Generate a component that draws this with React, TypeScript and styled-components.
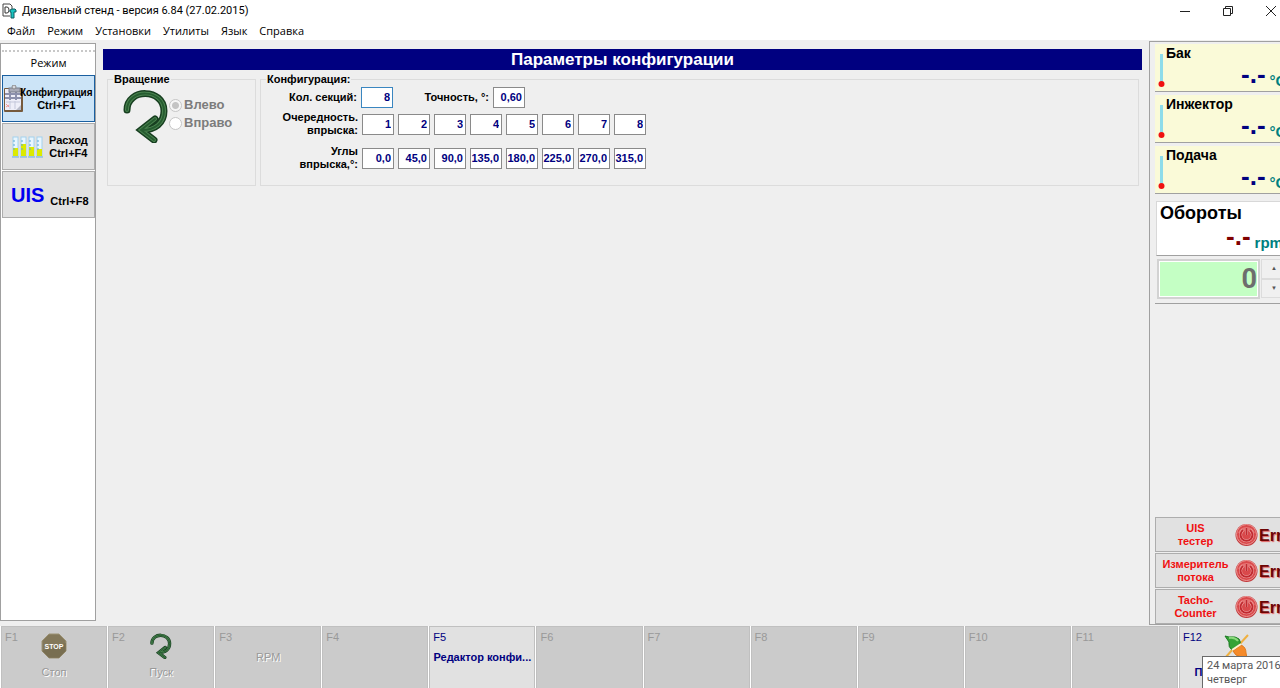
import React from "react";
import styled, { createGlobalStyle, css } from "styled-components";

const SANS = `"Liberation Sans", Arial, sans-serif`;
const UI = `"Open Sans", "Noto Sans", sans-serif`;
const UI_NARROW = `Roboto, "Open Sans", sans-serif`;

const GlobalStyle = createGlobalStyle`
  * { box-sizing: border-box; }
  body { margin: 0; background: #efefef; overflow: hidden; }
  button, input { font: inherit; color: inherit; }
  button { border-radius: 0; padding: 0; margin: 0; }
`;

const Shell = styled.div`
  display: flex;
  flex-direction: column;
  height: 100vh;
  overflow: hidden;
  background: #efefef;
  color: #000;
  font: bold 11px/13px ${SANS};
`;

const TitleBar = styled.header`
  display: flex;
  align-items: center;
  flex: none;
  height: 22px;
  padding-left: 2px;
  gap: 5px;
  background: #fff;
  font: 11px/16px ${UI_NARROW};
`;

const Title = styled.h1`
  flex: 1;
  margin: 0;
  font: inherit;
`;

const WindowButtons = styled.div`
  display: flex;
  align-items: center;
`;

const WindowButton = styled.button`
  display: flex;
  align-items: center;
  justify-content: center;
  width: 43px;
  height: 20px;
  border: 0;
  background: transparent;

  &:last-child { margin-right: -13px; }
`;

const MenuBar = styled.nav`
  display: flex;
  flex: none;
  height: 18px;
  padding-left: 7px;
  gap: 12px;
  background: #fff;
  font: 11px/18px ${UI};
`;

const MenuItem = styled.button`
  border: 0;
  background: transparent;
`;

const Body = styled.div`
  display: flex;
  flex: 1;
  min-height: 0;
`;

const ModePanel = styled.aside`
  display: flex;
  flex-direction: column;
  flex: none;
  gap: 1px;
  width: 96px;
  margin: 3px 0 5px;
  padding: 6px 0 0 1px;
  border: 1px solid #a0a0a0;
  background: #fff;
`;

const Grip = styled.div`
  border-top: 2px dotted #c8c8c8;
`;

const ModeCaption = styled.div`
  height: 21px;
  font: 11px/20px ${UI};
  text-align: center;
`;

const ModeButton = styled.button<{ $active?: boolean; $overlap?: boolean; $pad: number }>`
  display: flex;
  align-items: center;
  height: 47px;
  gap: ${(p) => (p.$overlap ? 0 : 6)}px;
  padding-left: ${(p) => p.$pad}px;
  overflow: hidden;
  border: 1px solid ${(p) => (p.$active ? "#1a5fa0" : "#adadad")};
  background: ${(p) => (p.$active ? "#cce4f7" : "#e1e1e1")};
  white-space: nowrap;

  svg {
    flex: none;
    margin-right: ${(p) => (p.$overlap ? -3 : 0)}px;
  }
`;

const LongName = styled.span`
  font-size: 10px;
`;

const UisMark = styled.span`
  color: #0000f0;
  font-size: 20px;
  line-height: 24px;
`;

const LowLabel = styled.span`
  padding-top: 14px;
`;

const Main = styled.main`
  flex: 1;
  min-width: 0;
  padding: 9px 7px 0;
`;

const Banner = styled.h2`
  margin: 0;
  background: #000080;
  color: #fff;
  font: bold 17px/21px ${SANS};
  text-align: center;
`;

const Groups = styled.div`
  display: flex;
  gap: 4px;
  padding: 3px 3px 0 4px;
`;

const Group = styled.fieldset<{ $grow?: boolean }>`
  ${(p) => (p.$grow ? css`flex: 1;` : css`flex: 0 0 149px;`)}
  height: 113px;
  min-width: 0;
  margin: 0;
  padding: 0;
  border: 1px solid #dcdcdc;
`;

const Legend = styled.legend`
  height: 13px;
  margin-left: 5px;
  padding: 0 1px;
`;

const Rotation = styled.div`
  display: flex;
  padding: 3px 0 0 15px;
`;

const RadioList = styled.div`
  display: flex;
  flex-direction: column;
  gap: 2px;
  padding-top: 8px;
`;

const RadioLabel = styled.label`
  display: flex;
  align-items: center;
  gap: 2px;
  color: #7c7c7c;
  font-size: 13px;
  line-height: 16px;
`;

const Radio = styled.input`
  appearance: none;
  width: 13px;
  height: 13px;
  margin: 0;
  border: 1px solid #c6c6c6;
  border-radius: 50%;
  background: #fff;

  &:checked {
    background: radial-gradient(circle, #c4c4c4 0 3px, #f6f6f6 4px);
  }
`;

const ConfigForm = styled.div`
  display: flex;
  flex-direction: column;
  margin-top: -2px;
`;

const ConfigRow = styled.div<{ $space?: number }>`
  display: flex;
  align-items: center;
  gap: 4px;
  height: 26px;
  margin-bottom: ${(p) => p.$space ?? 0}px;
`;

const FieldLabel = styled.label<{ $width?: number }>`
  flex: none;
  width: ${(p) => p.$width ?? 97}px;
  text-align: right;
`;

const Field = styled.input<{ $active?: boolean }>`
  width: 32px;
  height: 21px;
  padding: 0 2px 1px 0;
  border: 1px solid ${(p) => (p.$active ? "#3a86c0" : "#8a8a8a")};
  border-radius: 0;
  outline: 0;
  background: #fff;
  color: #000080;
  text-align: right;
`;

const SidePanel = styled.aside`
  flex: 0 0 131px;
  display: flex;
  flex-direction: column;
  margin: 1px 0 1px;
  padding: 2px 0 0 5px;
  overflow: hidden;
  border: solid #a0a0a0;
  border-width: 1px 0 1px 1px;
`;

const SensorCard = styled.section`
  flex: none;
  display: flex;
  width: 150px;
  height: 48px;
  margin-bottom: 3px;
  padding-left: 2px;
  border-bottom: 1px solid #a0a0a0;
  background: #fafad8;
`;

const SensorInfo = styled.div`
  flex: 1;
`;

const SensorName = styled.h3`
  margin: 0;
  font: bold 14px/18px ${SANS};
`;

const Reading = styled.div<{ $color: string; $indent: number }>`
  display: flex;
  align-items: flex-start;
  gap: 4px;
  padding-left: ${(p) => p.$indent}px;
  color: #008080;
  font: bold 15px/38px ${SANS};
  white-space: nowrap;

  output {
    color: ${(p) => p.$color};
    font: bold 26px/24px ${SANS};
  }
`;

const SpeedCard = styled.section`
  flex: none;
  width: 150px;
  height: 55px;
  margin: 4px 0 0 1px;
  padding-left: 3px;
  border: solid #d8d8d8;
  border-width: 1px 0 1px 1px;
  border-bottom-color: #a0a0a0;
  background: #fff;
`;

const SpeedName = styled.h3`
  margin: 0;
  font: bold 18px/22px ${SANS};
`;

const SpeedSetter = styled.div`
  flex: none;
  display: flex;
  width: 150px;
  height: 48px;
  padding: 3px 0 5px 2px;
  border-bottom: 1px solid #a0a0a0;
`;

const SpeedInput = styled.input`
  width: 103px;
  height: 40px;
  padding: 0 1px 0 0;
  border: 2px solid #d2d2d2;
  outline: 1px solid #fff;
  outline-offset: -3px;
  background: #c4ffc4;
  color: #6d6d6d;
  font: bold 27px/34px ${UI_NARROW};
  text-align: right;
`;

const Stepper = styled.div`
  display: flex;
  flex-direction: column;
  width: 26px;
  margin-left: 1px;

  button {
    flex: 1;
    border: 1px solid #dcdcdc;
    background: #f0f0f0;
    color: #555;
    font-size: 6px;
  }
`;

const Spacer = styled.div`
  flex: 1;
`;

const ErrorList = styled.div`
  flex: none;
  display: grid;
  gap: 1px;
`;

const ErrorButton = styled.button`
  display: flex;
  align-items: center;
  width: 150px;
  height: 35px;
  border: 1px solid #adadad;
  background: #e1e1e1;
  color: #f01010;

  svg { flex: none; }
`;

const ErrorLabel = styled.span`
  flex: 0 0 79px;
  text-align: center;
`;

const ErrorText = styled.span`
  margin-left: 1px;
  padding-top: 2px;
  color: #6d0404;
  font: bold 16px/20px ${SANS};
  text-shadow: 1px 1px 1px #e06060;
`;

const KeyBar = styled.footer`
  flex: none;
  display: grid;
  grid-template-columns: repeat(12, 1fr);
  gap: 1px;
  height: 62px;
  margin-right: -5px;
  padding-left: 1px;
  background: #fff;
`;

const KeyButton = styled.button<{ $enabled?: boolean }>`
  display: grid;
  grid-template-rows: 20px 1fr;
  min-width: 0;
  padding: 0 2px;
  border: solid #c0c0c0;
  border-width: 1px 1px 0;
  background: ${(p) => (p.$enabled ? "#e1e1e1" : "#cbcbcb")};
  color: ${(p) => (p.$enabled ? "#000080" : "#999")};
  text-align: left;
`;

const KeyName = styled.span`
  padding-left: 1px;
  font-weight: normal;
  line-height: 21px;
`;

const KeyContent = styled.span<{ $enabled?: boolean; $icon?: boolean }>`
  display: flex;
  flex-direction: column;
  align-items: center;
  min-width: 0;
  margin-top: ${(p) => (p.$icon ? -14 : 4)}px;
  gap: 7px;
  ${(p) => !p.$enabled && css`font-weight: normal; text-shadow: 1px 1px 0 #fff;`}

  svg { text-shadow: none; }
`;

const KeyText = styled.span`
  white-space: nowrap;
`;

const DateTip = styled.div`
  position: fixed;
  right: -4px;
  bottom: -2px;
  width: 82px;
  height: 34px;
  padding: 2px 0 0 4px;
  border: 1px solid #6a6a6a;
  background: #fff;
  color: #575757;
  font: 11px/14px ${UI_NARROW};
  white-space: nowrap;
`;

const AppIcon = () => (
  <svg width="15" height="16" viewBox="0 0 15 16" fill="none">
    <path d="M1 13V1h7l2 2v3M1 13h7" fill="#fff" stroke="#444" />
    <path d="M3 4h2q2 0 2 3t-2 3H3z" stroke="#333" />
    <path d="M8 7l2-1h3l1 1v2h-2v6H9V9H8z" fill="#18c4c0" stroke="#135a60" />
  </svg>
);

const ClipboardIcon = () => (
  <svg width="19" height="28" viewBox="0 0 19 28">
    <rect x="0" y="3" width="19" height="24" rx="1" fill="#765a3c" />
    <rect x="1" y="4" width="16" height="21" fill="#eeeef8" />
    <path d="M1 9h16M1 13h16M6 6v9M12 6v9" stroke="#8d91ad" strokeWidth="2" />
    <path d="M2 17h14M6 16v8M11 16v8" stroke="#c4c7da" />
    <rect x="5" y="3" width="11" height="4" fill="#a9abb8" stroke="#787c8a" />
    <circle cx="10" cy="2" r="2" fill="#d6d8e0" stroke="#888" />
    <path d="M2 19l3 3M2 22l3-2" stroke="#e99" />
    <path d="M12 25l5-5v5z" fill="#b9bcca" />
  </svg>
);

const TubesIcon = () => (
  <svg width="31" height="22" viewBox="0 0 31 22">
    {[0, 8, 16, 24].map((x, i) => (
      <g key={x}>
        <rect x={x + 1} y="1" width="5" height="19" fill="#e8f6ff" stroke="#a4d2ee" />
        <rect x={x + 1} y={[12, 8, 11, 13][i]} width="5" height={[8, 12, 9, 7][i]} fill="#dcea00" />
        <path d={`M${x + 1} 5h2M${x + 1} 9h2M${x + 1} 13h2`} stroke="#5aa8d8" />
        <path d={`M${x} 21h7`} stroke="#6fb0dc" />
      </g>
    ))}
  </svg>
);

const TURN = "M4 21C4 -1 41 -1 41 22C41 34 32 41 19 41M32 30L18 41L31 51";

const TurnIcon = ({ size, height, weight }: { size: number; height: number; weight: number }) => (
  <svg width={size} height={height} viewBox="0 0 46 54" fill="none" strokeLinecap="round">
    <path d={TURN} stroke="#173f20" strokeWidth={weight} />
    <path d={TURN} stroke="#4b8450" strokeWidth={weight - 3} />
    <path d={TURN} stroke="#265c30" strokeWidth="2" />
  </svg>
);

const Thermometer = () => (
  <svg width="9" height="46" viewBox="0 0 9 46">
    <rect x="3" y="10" width="3" height="28" fill="#8edcea" />
    <circle cx="4.500" cy="40" r="3" fill="#f01010" />
  </svg>
);

const PowerIcon = () => (
  <svg width="23" height="24" viewBox="0 0 23 24" fill="none">
    <circle cx="11.500" cy="12" r="11" fill="#c2383a" />
    <circle cx="11.500" cy="11.500" r="10" fill="#d9494b" stroke="#ee9b99" />
    <path d="M3 10a9 9 0 0 1 17 0q-8-4-17 0z" fill="#f0908e" opacity=".6" />
    <path d="M8 7a6 6 0 1 0 7 0M11.500 5v7" stroke="#f3aaa8" strokeWidth="3" />
    <path d="M8 7a6 6 0 1 0 7 0M11.500 5v7" stroke="#c02a30" strokeWidth="2" />
  </svg>
);

const StopIcon = () => (
  <svg width="26" height="26" viewBox="0 0 26 26">
    <path d="M8 1h10l7 7v10l-7 7H8l-7-7V8z" fill="#83785a" stroke="#9c9274" />
    <path d="M1 18l24-8v8l-7 7H8z" fill="#6d6347" opacity=".5" />
    <text x="13" y="16" fill="#fff" fontFamily="Liberation Sans" fontSize="7" fontWeight="bold" textAnchor="middle">STOP</text>
  </svg>
);

const PlugIcon = () => (
  <svg width="36" height="26" viewBox="-10 0 36 26">
    <path d="M24 2L14 13M9 16L1 25" stroke="#efb040" strokeWidth="2" />
    <path d="M1 3L5 4Q12 3 15 6Q17 9 16 11L8 17Q4 14 5 9Z" fill="#35a336" stroke="#1b7a22" />
    <path d="M5 5q6-1 9 3" stroke="#8ada7c" strokeWidth="2" fill="none" />
    <path d="M17 12q5 2 5 8l1 5-6-1q-6-1-8-6z" fill="#f58a2a" stroke="#e07a1c" />
    <path d="M8 17l9-6" stroke="#fff1cf" strokeWidth="2" />
  </svg>
);

const angles = ["0,0", "45,0", "90,0", "135,0", "180,0", "225,0", "270,0", "315,0"];
const sensors = ["Бак", "Инжектор", "Подача"];
const errors = [["UIS", "тестер"], ["Измеритель", "потока"], ["Tacho-", "Counter"]];

type Key = { text?: string; icon?: React.ReactNode; enabled?: boolean };
const keys: Key[] = [
  { text: "Стоп", icon: <StopIcon /> },
  { text: "Пуск", icon: <TurnIcon size={22} height={26} weight={7} /> },
  { text: "RPM" },
  {},
  { text: "Редактор конфи...", enabled: true },
  {}, {}, {}, {}, {}, {},
  { text: "Подключение", icon: <PlugIcon />, enabled: true },
];

export default function App() {
  return (
    <Shell>
      <GlobalStyle />
      <TitleBar>
        <AppIcon />
        <Title>Дизельный стенд - версия 6.84 (27.02.2015)</Title>
        <WindowButtons>
          <WindowButton aria-label="Свернуть">
            <svg width="11" height="11" stroke="#222"><path d="M0 5.500h10" /></svg>
          </WindowButton>
          <WindowButton aria-label="Развернуть">
            <svg width="11" height="11" fill="none" stroke="#222"><path d="M.5 2.500h7v7h-7zM2.500 2V.5h7v7H8" /></svg>
          </WindowButton>
          <WindowButton aria-label="Закрыть">
            <svg width="11" height="11" stroke="#222"><path d="M0 0l10 10M10 0l-10 10" /></svg>
          </WindowButton>
        </WindowButtons>
      </TitleBar>
      <MenuBar>
        {["Файл", "Режим", "Установки", "Утилиты", "Язык", "Справка"].map((m) => (
          <MenuItem key={m}>{m}</MenuItem>
        ))}
      </MenuBar>

      <Body>
        <ModePanel>
          <Grip />
          <ModeCaption>Режим</ModeCaption>
          <ModeButton $active $overlap $pad={1}>
            <ClipboardIcon />
            <span><LongName>Конфигурация</LongName><br />Ctrl+F1</span>
          </ModeButton>
          <ModeButton $pad={9}>
            <TubesIcon />
            <span>Расход<br />Ctrl+F4</span>
          </ModeButton>
          <ModeButton $pad={8}>
            <UisMark>UIS</UisMark>
            <LowLabel>Ctrl+F8</LowLabel>
          </ModeButton>
        </ModePanel>

        <Main>
          <Banner>Параметры конфигурации</Banner>
          <Groups>
            <Group disabled>
              <Legend>Вращение</Legend>
              <Rotation>
                <TurnIcon size={46} height={54} weight={7} />
                <RadioList>
                  <RadioLabel><Radio type="radio" name="turn" defaultChecked />Влево</RadioLabel>
                  <RadioLabel><Radio type="radio" name="turn" />Вправо</RadioLabel>
                </RadioList>
              </Rotation>
            </Group>
            <Group $grow>
              <Legend>Конфигурация:</Legend>
              <ConfigForm>
                <ConfigRow $space={1}>
                  <FieldLabel $width={96} htmlFor="sections">Кол. секций:</FieldLabel>
                  <Field id="sections" $active autoFocus defaultValue="8" />
                  <FieldLabel $width={92} htmlFor="precision">Точность, °:</FieldLabel>
                  <Field id="precision" defaultValue="0,60" />
                </ConfigRow>
                <ConfigRow $space={8}>
                  <FieldLabel htmlFor="order-1">Очередность.<br />впрыска:</FieldLabel>
                  {angles.map((_, i) => (
                    <Field key={i} id={`order-${i + 1}`} aria-label={`Очередность ${i + 1}`} defaultValue={i + 1} />
                  ))}
                </ConfigRow>
                <ConfigRow>
                  <FieldLabel htmlFor="angle-1">Углы<br />впрыска,°:</FieldLabel>
                  {angles.map((a, i) => (
                    <Field key={a} id={`angle-${i + 1}`} aria-label={`Угол ${i + 1}`} defaultValue={a} />
                  ))}
                </ConfigRow>
              </ConfigForm>
            </Group>
          </Groups>
        </Main>

        <SidePanel>
          {sensors.map((name) => (
            <SensorCard key={name}>
              <Thermometer />
              <SensorInfo>
                <SensorName>{name}</SensorName>
                <Reading $color="#000080" $indent={75}>
                  <output>-.-</output>°C
                </Reading>
              </SensorInfo>
            </SensorCard>
          ))}
          <SpeedCard>
            <SpeedName>Обороты</SpeedName>
            <Reading $color="#800000" $indent={66}>
              <output>-.-</output>rpm
            </Reading>
          </SpeedCard>
          <SpeedSetter>
            <SpeedInput aria-label="Обороты" defaultValue="0" />
            <Stepper>
              <button aria-label="Больше">▲</button>
              <button aria-label="Меньше">▼</button>
            </Stepper>
          </SpeedSetter>
          <Spacer />
          <ErrorList>
            {errors.map(([a, b]) => (
              <ErrorButton key={a}>
                <ErrorLabel>{a}<br />{b}</ErrorLabel>
                <PowerIcon />
                <ErrorText>Error</ErrorText>
              </ErrorButton>
            ))}
          </ErrorList>
        </SidePanel>
      </Body>

      <KeyBar>
        {keys.map((k, i) => (
          <KeyButton key={i} $enabled={k.enabled} disabled={!k.enabled}>
            <KeyName>F{i + 1}</KeyName>
            <KeyContent $enabled={k.enabled} $icon={!!k.icon}>
              {k.icon}
              {k.text && <KeyText>{k.text}</KeyText>}
            </KeyContent>
          </KeyButton>
        ))}
      </KeyBar>
      <DateTip role="tooltip">24 марта 2016<br />четверг</DateTip>
    </Shell>
  );
}
